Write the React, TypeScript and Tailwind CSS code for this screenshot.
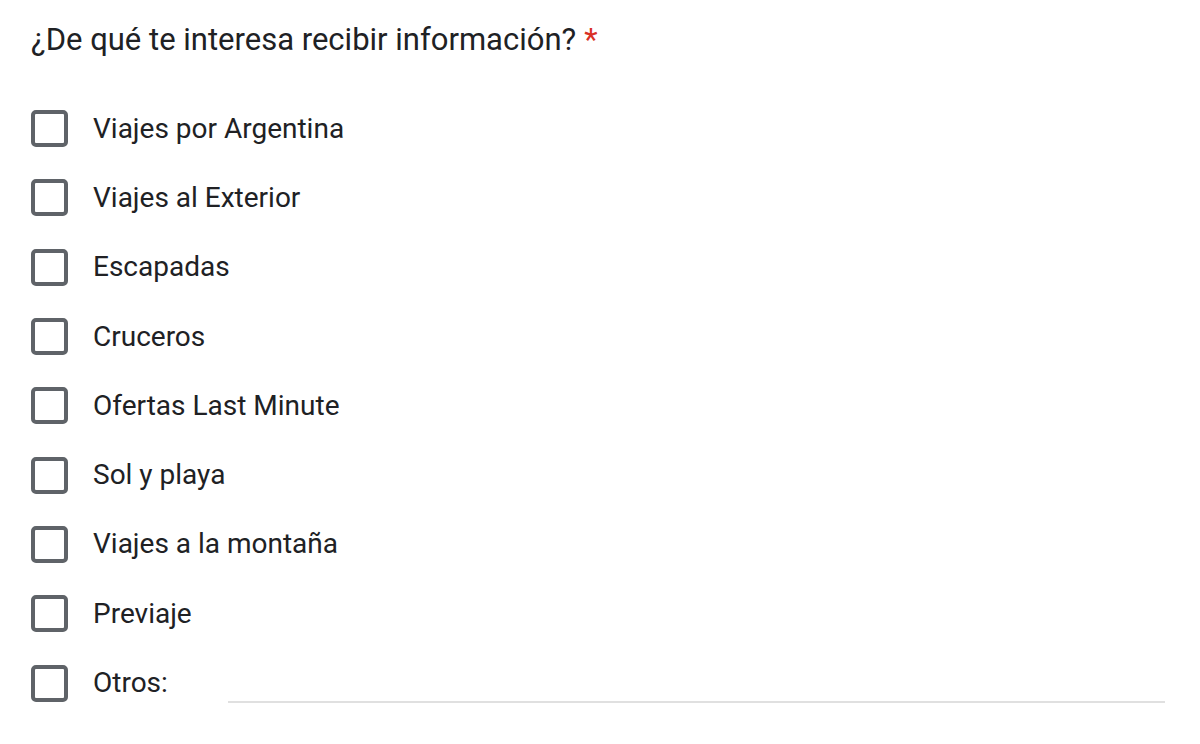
const options = [
  "Viajes por Argentina",
  "Viajes al Exterior",
  "Escapadas",
  "Cruceros",
  "Ofertas Last Minute",
  "Sol y playa",
  "Viajes a la montaña",
  "Previaje",
];

function Box() {
  return (
    <span className="box-border block h-[37px] w-[37px] shrink-0 rounded-[5px] border-[4px] border-[#5f6368]" />
  );
}

export default function App() {
  return (
    <div
      className="min-h-[744px] w-[1200px] bg-white pl-[31px] pt-[18px] text-[#202124]"
      style={{ fontFamily: "Roboto, 'Liberation Sans', sans-serif" }}
    >
      <div className="flex items-center text-[31px] leading-[44px]">
        <span>¿De qué te interesa recibir información?</span>
        <span className="ml-[8px] text-[#d93025]">*</span>
      </div>

      <div className="mt-[32px] flex flex-col">
        {options.map((o) => (
          <label key={o} className="flex h-[69.3px] items-center gap-[25px]">
            <Box />
            <span className="text-[28px]">{o}</span>
          </label>
        ))}
        <label className="flex h-[69.3px] items-center gap-[25px]">
          <Box />
          <span className="w-[110px] text-[28px]">Otros:</span>
          <span className="mt-[38px] h-[2px] w-[937px] bg-[#e0e0e0]" />
        </label>
      </div>
    </div>
  );
}
